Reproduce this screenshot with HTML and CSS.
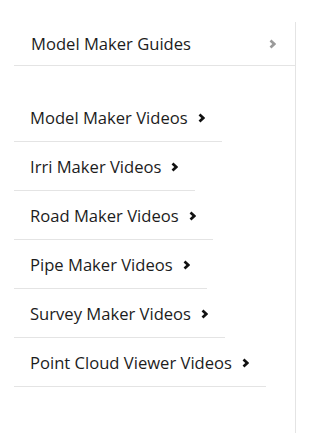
FILE: index.html
```html
<!DOCTYPE html>
<html lang="en">
<head>
<meta charset="utf-8">
<title>Guides</title>
<link rel="stylesheet" href="styles.css">
</head>
<body>
<nav class="sidebar">
  <a class="guide-head" href="#">
    <span>Model Maker Guides</span>
    <svg class="chev chev-grey" viewBox="0 0 7 10" width="7" height="10"><polyline points="1.5,1.5 5.3,5 1.5,8.5"/></svg>
  </a>
  <ul class="videos">
    <li><a href="#"><span>Model Maker Videos</span><svg class="chev" viewBox="0 0 7 10" width="7" height="10"><polyline points="1.5,1.5 5.3,5 1.5,8.5"/></svg></a></li>
    <li><a href="#"><span>Irri Maker Videos</span><svg class="chev" viewBox="0 0 7 10" width="7" height="10"><polyline points="1.5,1.5 5.3,5 1.5,8.5"/></svg></a></li>
    <li><a href="#"><span>Road Maker Videos</span><svg class="chev" viewBox="0 0 7 10" width="7" height="10"><polyline points="1.5,1.5 5.3,5 1.5,8.5"/></svg></a></li>
    <li><a href="#"><span>Pipe Maker Videos</span><svg class="chev" viewBox="0 0 7 10" width="7" height="10"><polyline points="1.5,1.5 5.3,5 1.5,8.5"/></svg></a></li>
    <li><a href="#"><span>Survey Maker Videos</span><svg class="chev" viewBox="0 0 7 10" width="7" height="10"><polyline points="1.5,1.5 5.3,5 1.5,8.5"/></svg></a></li>
    <li><a href="#"><span>Point Cloud Viewer Videos</span><svg class="chev" viewBox="0 0 7 10" width="7" height="10"><polyline points="1.5,1.5 5.3,5 1.5,8.5"/></svg></a></li>
  </ul>
</nav>
</body>
</html>
```
FILE: styles.css
```css
html, body {
  margin: 0;
  padding: 0;
  background: #fff;
}
body {
  font-family: "Open Sans", "Noto Sans", sans-serif;
  font-size: 16.6px;
  color: #1c1c1c;
}
.sidebar {
  margin: 22px 0 0 14px;
  width: 281px;
  min-height: 411px;
  border-right: 1px solid #e4e4e4;
  box-sizing: content-box;
}
.guide-head {
  display: flex;
  align-items: center;
  justify-content: space-between;
  padding: 10px 19px 10px 17px;
  line-height: 23px;
  border-bottom: 1px solid #e4e4e4;
  color: #1c1c1c;
  text-decoration: none;
}
.videos {
  list-style: none;
  margin: 27px 0 0;
  padding: 0;
  display: flex;
  flex-direction: column;
  align-items: flex-start;
}
.videos a {
  display: flex;
  align-items: center;
  gap: 10px;
  padding: 13px 17px 12px 16px;
  line-height: 23px;
  border-bottom: 1px solid #e4e4e4;
  color: #1c1c1c;
  text-decoration: none;
}
.chev {
  display: block;
  flex: none;
}
.chev polyline {
  fill: none;
  stroke: #111;
  stroke-width: 2.7;
  stroke-linecap: butt;
  stroke-linejoin: miter;
}
.chev-grey polyline {
  stroke: #9a9a9a;
}
```
